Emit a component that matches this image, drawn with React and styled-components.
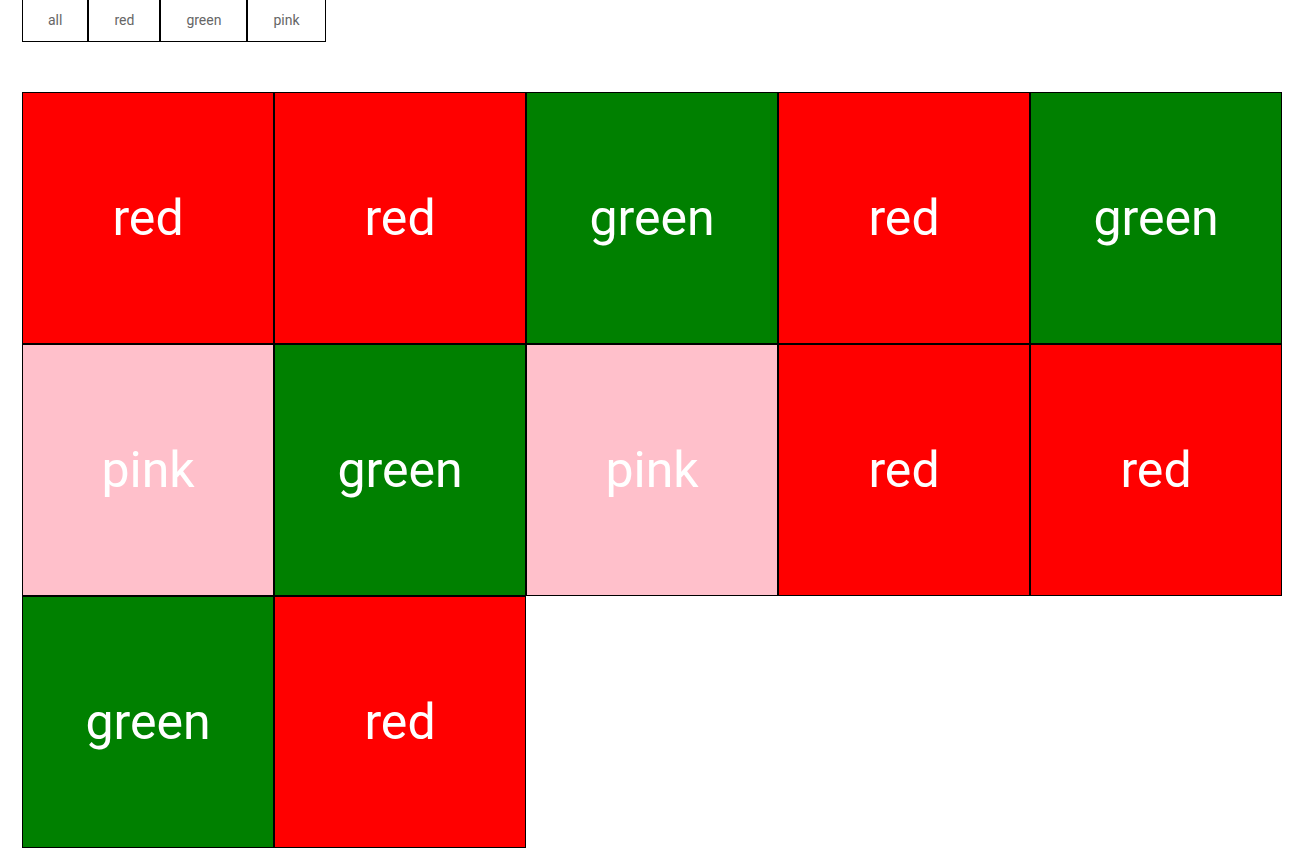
import React from 'react';
import styled, { createGlobalStyle } from 'styled-components';

const GlobalStyle = createGlobalStyle`
  html, body {
    margin: 0;
    padding: 0;
    background: #fff;
    font-family: Roboto, "Liberation Sans", Arial, sans-serif;
  }
`;

const Page = styled.div`
  padding: 0 21px 0 22px;
`;

const FilterBar = styled.nav`
  display: flex;
  margin-top: -2px;
`;

const FilterButton = styled.button`
  font-family: Roboto, "Liberation Sans", Arial, sans-serif;
  font-size: 14px;
  line-height: 16px;
  color: #666;
  background: #fff;
  border: 1px solid #000;
  padding: 13px 25px;
  margin: 0;
  cursor: pointer;
`;

const Grid = styled.div`
  display: flex;
  flex-wrap: wrap;
  width: 1260px;
  margin-top: 50px;
`;

const Tile = styled.div`
  box-sizing: border-box;
  width: 252px;
  height: 252px;
  border: 1px solid #000;
  background: ${(p) => p.color};
  color: #fff;
  font-size: 50px;
  display: flex;
  align-items: center;
  justify-content: center;
`;

const filters = ['all', 'red', 'green', 'pink'];

const tiles = [
  'red', 'red', 'green', 'red', 'green',
  'pink', 'green', 'pink', 'red', 'red',
  'green', 'red',
];

const App = () => {
  return (
    <Page>
      <GlobalStyle />
      <FilterBar>
        {filters.map((f) => (
          <FilterButton key={f}>{f}</FilterButton>
        ))}
      </FilterBar>
      <Grid>
        {tiles.map((c, i) => (
          <Tile key={i} color={c}>
            {c}
          </Tile>
        ))}
      </Grid>
    </Page>
  );
};

export default App;
